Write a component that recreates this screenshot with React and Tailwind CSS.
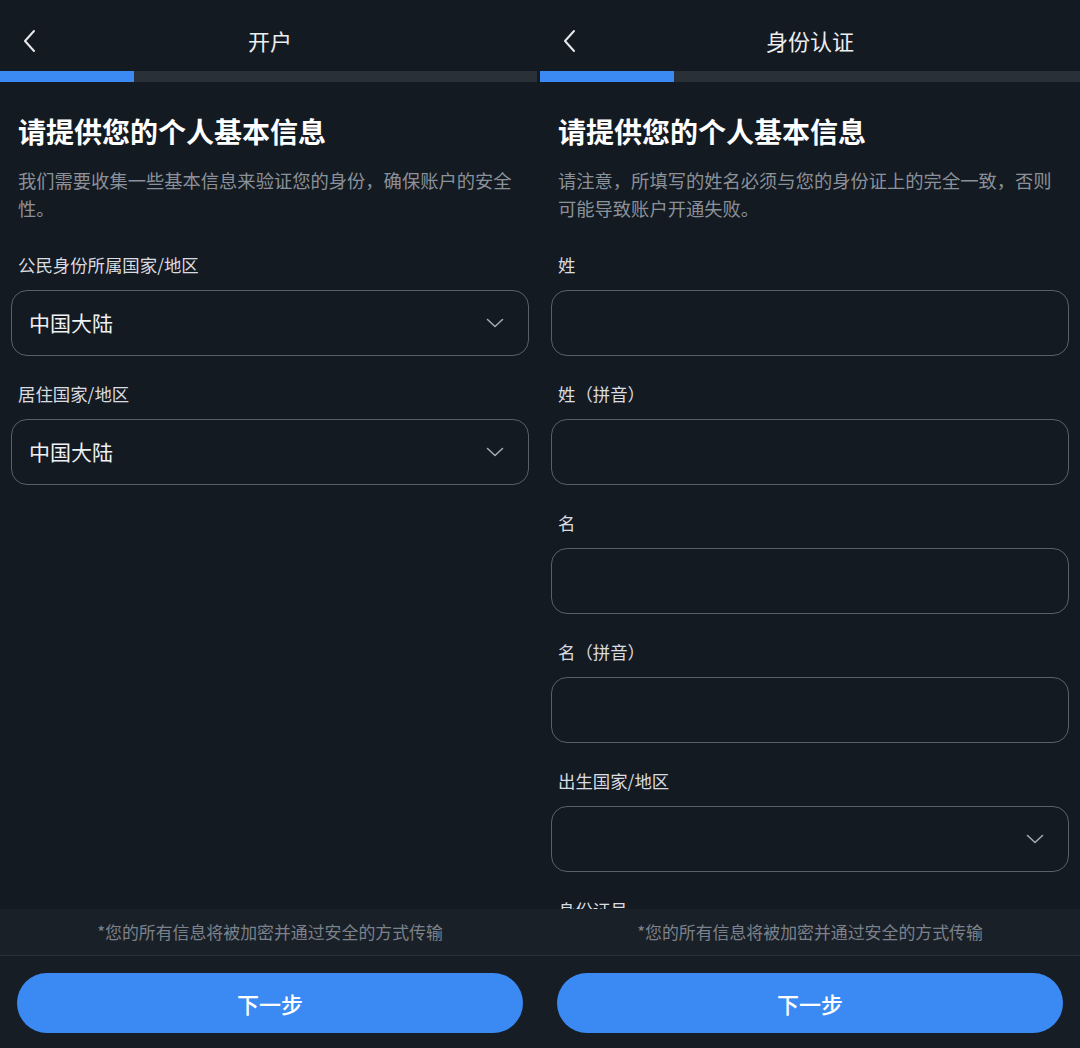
import React from "react";

const font = { fontFamily: '"Noto Sans CJK SC", "Noto Sans", sans-serif' };

function Chevron() {
  return (
    <svg width="18" height="10" viewBox="0 0 18 10" fill="none">
      <path d="M1.5 1.5 L9 8.5 L16.5 1.5" stroke="#a3a9b2" strokeWidth="1.6" strokeLinecap="round" strokeLinejoin="round" />
    </svg>
  );
}

function Back() {
  return (
    <svg width="16" height="24" viewBox="0 0 16 24" fill="none">
      <path d="M12 2 L3 12 L12 22" stroke="#e6e8eb" strokeWidth="2" strokeLinecap="round" strokeLinejoin="round" />
    </svg>
  );
}

function Field({ label, value, select }) {
  return (
    <div className="flex flex-col">
      <div className="pl-[7px] text-[17.4px] leading-[24px] text-[#d9dce0]">{label}</div>
      <div className="mt-[13px] h-[66px] rounded-[16px] border-[1.5px] border-[#59606b] flex items-center justify-between pl-[17px] pr-[24px]">
        <span className="text-[21px] text-[#eef0f2]">{value || ""}</span>
        {select ? <Chevron /> : null}
      </div>
    </div>
  );
}

function Panel({ title, desc, fields, barGap }) {
  return (
    <div className="w-[540px] h-[1048px] bg-[#141a21] flex flex-col overflow-hidden" style={font}>
      <div className="h-[71px] pt-[10px] flex items-center relative shrink-0">
        <div className="pl-[22px] flex items-center"><Back /></div>
        <div className="absolute left-0 right-0 top-[10px] bottom-0 flex items-center justify-center text-[22px] text-[#eceef0]">
          {title}
        </div>
      </div>
      <div className={`h-[11px] bg-[#2a3038] shrink-0 flex ${barGap ? "mr-[3px]" : ""}`}>
        <div className="w-[134px] bg-[#3b8af4]" />
      </div>
      <div className="flex-1 overflow-hidden px-[11px]">
        <div className="pl-[7px] mt-[31px] text-[28px] leading-[36px] font-bold text-white">
          请提供您的个人基本信息
        </div>
        <div className="pl-[7px] mt-[17px] text-[18.3px] leading-[28px] text-[#8b919a] whitespace-nowrap">
          {desc[0]}
          <br />
          {desc[1]}
        </div>
        <div className="mt-[31px] flex flex-col gap-[26px]">
          {fields.map((f, i) => (
            <Field key={i} {...f} />
          ))}
        </div>
      </div>
      <div className="shrink-0 bg-[#1a2028]">
        <div className="h-[47px] flex items-center justify-center text-[16.9px] text-[#7c828b] border-b border-[#2a3039]">
          *您的所有信息将被加密并通过安全的方式传输
        </div>
        <div className="h-[92px] bg-[#171d25] px-[17px] pt-[17px]">
          <div className="h-[60px] rounded-full bg-[#3b8af4] flex items-center justify-center text-[22px] text-white font-medium">
            下一步
          </div>
        </div>
      </div>
    </div>
  );
}

export default function App() {
  return (
    <div className="w-[1080px] h-[1048px] flex bg-[#141a21]">
      <Panel
        barGap
        title="开户"
        desc={["我们需要收集一些基本信息来验证您的身份，确保账户的安全", "性。"]}
        fields={[
          { label: "公民身份所属国家/地区", value: "中国大陆", select: true },
          { label: "居住国家/地区", value: "中国大陆", select: true },
        ]}
      />
      <Panel
        title="身份认证"
        desc={["请注意，所填写的姓名必须与您的身份证上的完全一致，否则", "可能导致账户开通失败。"]}
        fields={[
          { label: "姓" },
          { label: "姓（拼音）" },
          { label: "名" },
          { label: "名（拼音）" },
          { label: "出生国家/地区", select: true },
          { label: "身份证号" },
        ]}
      />
    </div>
  );
}
